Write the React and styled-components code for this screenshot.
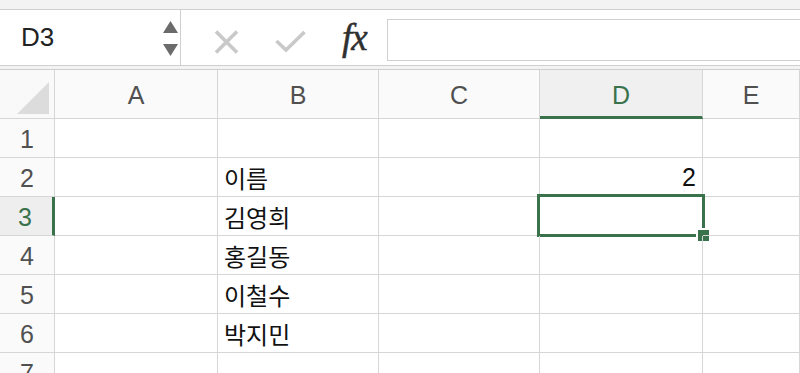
import React from "react";
import styled, { createGlobalStyle } from "styled-components";

const GREEN = "#3a724c";
const GRID = "#d6d6d6";

const Global = createGlobalStyle`
  html, body { margin: 0; padding: 0; background: #fff; }
  body { font-family: "Liberation Sans", "Noto Sans CJK KR", sans-serif; overflow: hidden; }
`;

const Page = styled.div`
  width: 800px;
  height: 373px;
  overflow: hidden;
  background: #fff;
`;

const TopStrip = styled.div`
  height: 9px;
  background: #f3f3f3;
  border-bottom: 1px solid #cfcfcf;
`;

const FormulaBar = styled.div`
  display: flex;
  height: 55px;
  background: #fff;
  border-bottom: 1px solid #cfcfcf;
`;

const NameBox = styled.div`
  width: 181px;
  border-right: 1px solid #cfcfcf;
  display: flex;
  align-items: center;
  justify-content: space-between;
  padding: 0 2px 0 21px;
  box-sizing: border-box;
  font-size: 26px;
  color: #222;
  font-family: "Liberation Sans", sans-serif;
`;

const Spinner = styled.div`
  display: flex;
  flex-direction: column;
  gap: 11px;
  margin-top: 1px;
`;

const Controls = styled.div`
  width: 206px;
  display: flex;
  align-items: center;
  padding: 8px 0 0 33px;
  box-sizing: border-box;
`;

const IconSlot = styled.div`
  width: ${(p) => p.$w}px;
  display: flex;
  align-items: center;
`;

const Fx = styled.span`
  font-family: "Liberation Serif", "DejaVu Serif", serif;
  font-style: italic;
  font-size: 37px;
  color: #2f2f2f;
  letter-spacing: -1px;
  margin: -9px 0 0 3px;
  -webkit-text-stroke: 0.5px #2f2f2f;
`;

const FormulaInput = styled.div`
  flex: 1;
  margin: 9px 0 4px 0;
  border: 1px solid #d0d0d0;
  border-right: none;
  background: #fff;
`;

const Gap = styled.div`
  height: 3px;
  background: #f3f3f3;
  border-bottom: 1px solid #cfcfcf;
`;

const Sheet = styled.div`
  display: grid;
  grid-template-columns: 55px 163px 161px 161px 163px 1fr;
  grid-auto-rows: 39px;
  grid-template-rows: 49px;
`;

const Corner = styled.div`
  background: #f9f9f9;
  border-right: 1px solid ${GRID};
  border-bottom: 1px solid ${GRID};
  position: relative;
`;

const ColHead = styled.div`
  background: ${(p) => (p.$active ? "#f0f0f0" : "#fafafa")};
  border-right: 1px solid ${GRID};
  border-bottom: ${(p) => (p.$active ? `3px solid ${GREEN}` : `1px solid ${GRID}`)};
  display: flex;
  align-items: center;
  justify-content: center;
  padding-top: ${(p) => (p.$active ? "4px" : "2px")};
  font-family: "Liberation Sans", sans-serif;
  font-size: 25px;
  color: ${(p) => (p.$active ? GREEN : "#505050")};
`;

const RowHead = styled.div`
  background: ${(p) => (p.$active ? "#eeeeee" : "#fafafa")};
  border-right: ${(p) => (p.$active ? `3px solid ${GREEN}` : `1px solid ${GRID}`)};
  border-bottom: 1px solid ${GRID};
  display: flex;
  align-items: center;
  justify-content: center;
  padding: 2px ${(p) => (p.$active ? "2px" : "0")} 0 0;
  font-family: "Liberation Sans", sans-serif;
  font-size: 25px;
  color: ${(p) => (p.$active ? GREEN : "#505050")};
`;

const Cell = styled.div`
  border-right: 1px solid ${GRID};
  border-bottom: 1px solid ${GRID};
  display: flex;
  align-items: center;
  justify-content: ${(p) => (p.$num ? "flex-end" : "flex-start")};
  padding: 0 6px 0 6px;
  font-family: ${(p) => (p.$num ? `"Liberation Sans", sans-serif` : `"Noto Sans CJK KR", sans-serif`)};
  font-size: ${(p) => (p.$num ? "25px" : "24px")};
  color: #111;
  position: relative;
`;

const Selection = styled.div`
  position: absolute;
  left: -3px;
  top: -3px;
  right: -3px;
  bottom: -2px;
  border: 3px solid ${GREEN};
  pointer-events: none;
`;

const Handle = styled.div`
  position: absolute;
  right: -7px;
  bottom: -7px;
  width: 11px;
  height: 11px;
  background: ${GREEN};
  border: 2px solid #fff;
  border-right-width: 0;
  border-bottom-width: 0;
`;

const cols = ["A", "B", "C", "D", "E"];
const data = {
  "B2": "이름",
  "D2": "2",
  "B3": "김영희",
  "B4": "홍길동",
  "B5": "이철수",
  "B6": "박지민",
};

export default function App() {
  const rows = [1, 2, 3, 4, 5, 6, 7];
  return (
    <Page>
      <Global />
      <TopStrip />
      <FormulaBar>
        <NameBox>
          <span>D3</span>
          <Spinner>
            <svg width="15" height="12" viewBox="0 0 15 12"><path d="M7.5 0 L15 12 L0 12 Z" fill="#6b6b6b" /></svg>
            <svg width="15" height="12" viewBox="0 0 15 12"><path d="M0 0 L15 0 L7.5 12 Z" fill="#6b6b6b" /></svg>
          </Spinner>
        </NameBox>
        <Controls>
          <IconSlot $w={61}>
            <svg width="25" height="24" viewBox="0 0 25 24">
              <path d="M2 1.5 L23 22.5 M23 1.5 L2 22.5" stroke="#c9c9c9" strokeWidth="3.6" />
            </svg>
          </IconSlot>
          <IconSlot $w={64}>
            <svg width="31" height="23" viewBox="0 0 31 23">
              <path d="M1.5 11 L11 20 L29.5 2" stroke="#c9c9c9" strokeWidth="3.6" fill="none" />
            </svg>
          </IconSlot>
          <IconSlot $w={40}>
            <Fx>fx</Fx>
          </IconSlot>
        </Controls>
        <FormulaInput />
      </FormulaBar>
      <Gap />
      <Sheet>
        <Corner>
          <svg width="32" height="32" viewBox="0 0 32 32" style={{ position: "absolute", left: 17, top: 12 }}>
            <path d="M32 0 L32 32 L0 32 Z" fill="#dcdcdc" />
          </svg>
        </Corner>
        {cols.map((c) => (
          <ColHead key={c} $active={c === "D"}>{c}</ColHead>
        ))}
        {rows.map((r) => (
          <React.Fragment key={r}>
            <RowHead $active={r === 3}>{r}</RowHead>
            {cols.map((c) => {
              const id = c + r;
              const v = data[id];
              return (
                <Cell key={id} $num={v && /^\d+$/.test(v)}>
                  {v}
                  {id === "D3" && (
                    <Selection>
                      <Handle />
                    </Selection>
                  )}
                </Cell>
              );
            })}
          </React.Fragment>
        ))}
      </Sheet>
    </Page>
  );
}
